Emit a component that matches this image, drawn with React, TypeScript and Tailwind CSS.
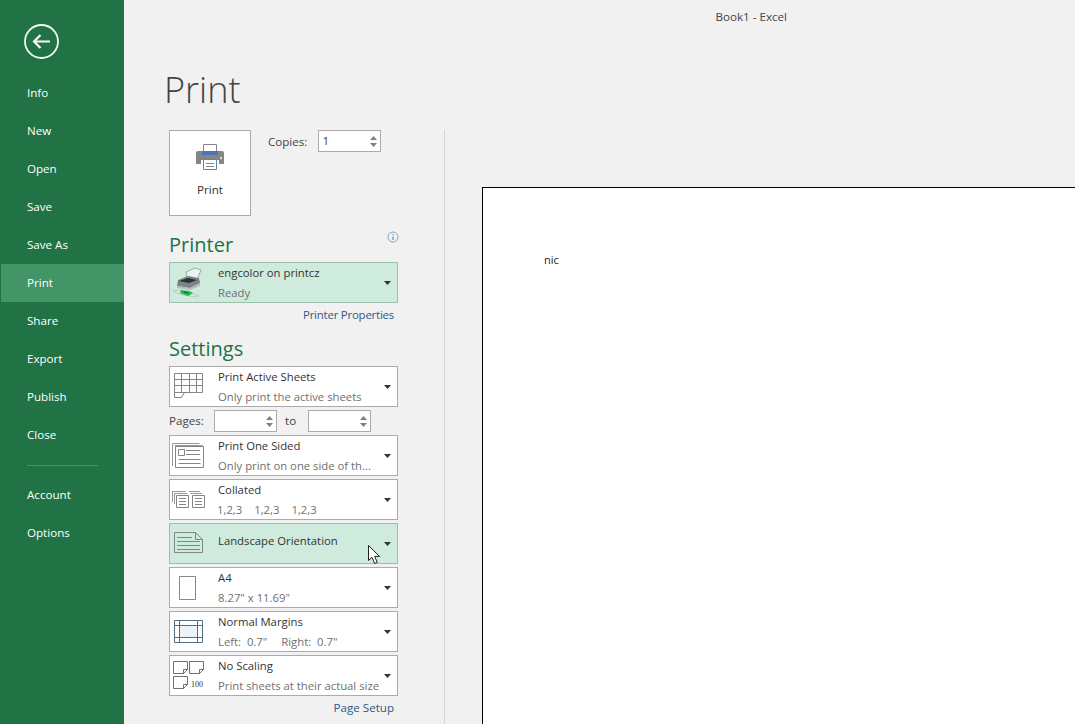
import { ReactNode } from "react";

const navTop = ["Info", "New", "Open", "Save", "Save As", "Print", "Share", "Export", "Publish", "Close"];
const navBottom = ["Account", "Options"];

function NavItem({ label }: { label: string }) {
  const active = label === "Print";
  return (
    <div className={`h-[38px] flex items-center pl-[26px] pb-px ml-px text-[11.6px] text-white ${active ? "bg-[#439467]" : ""}`}>
      {label}
    </div>
  );
}

function Spinner() {
  return (
    <div className="flex flex-col gap-[3px] items-center">
      <svg width="7" height="4" viewBox="0 0 7 4"><path d="M3.500 0 7 4H0z" fill="#808080" /></svg>
      <svg width="7" height="4" viewBox="0 0 7 4"><path d="M0 0h7L3.500 4z" fill="#808080" /></svg>
    </div>
  );
}

function NumBox({ value, w }: { value?: string; w: string }) {
  return (
    <div className={`${w} h-[22px] bg-white border border-[#ababab] flex items-center justify-between pl-[3px] pr-[3px] text-[11.6px] text-[#444]`}>
      <span>{value}</span>
      <Spinner />
    </div>
  );
}

function Dropdown({ icon, title, sub, hi }: { icon: ReactNode; title: string; sub?: ReactNode; hi?: boolean }) {
  return (
    <div className={`w-[229px] h-[41px] border flex items-center ${hi ? "bg-[#cfebdd] border-[#9dc0ad]" : "bg-white border-[#ababab]"}`}>
      <div className="w-[48px] shrink-0 flex justify-start">{icon}</div>
      <div className={`flex-1 min-w-0 flex flex-col gap-[4px] text-[11.3px] leading-[16px] whitespace-nowrap ${sub ? "" : "pb-[5px]"}`}>
        <div className="text-[#333]">{title}</div>
        {sub && <div className="text-[#707070]">{sub}</div>}
      </div>
      <svg className="shrink-0 mr-[6px]" width="7" height="4" viewBox="0 0 7 4"><path d="M0 0h7L3.500 4z" fill="#333" /></svg>
    </div>
  );
}

const s = { fill: "none", stroke: "#858585", strokeWidth: 1 };

const SheetsIcon = (
  <svg className="ml-[4px] mt-[-1px]" width="29" height="26" viewBox="0 0 29 26" {...s}>
    <path d="M.5.500h28v19H.5zM.5 6.500h28M.5 12.500h28M7.500.500v19M15.500.500v19M22.500.500v19M.5 19.500v5h7l3-5" />
  </svg>
);
const OneSidedIcon = (
  <svg className="ml-[2px] mt-[-1px]" width="32" height="25" viewBox="0 0 32 25" {...s}>
    <path d="M.5 23V.500h27" stroke="#999" />
    <path d="M2.500 2.500h28" stroke="#999" />
    <path d="M3.500 3.500h28v21h-28zM6.500 6.500h6v6h-6zM14 7.500h14M14 11.500h14M6.500 16.500h22M6.500 20.500h22" />
  </svg>
);
const CollatedIcon = (
  <svg className="ml-[2px] mt-[-1px]" width="33" height="17" viewBox="0 0 33 17" {...s}>
    <path d="M.5 11V.500h13M2.500 13V2.500h13M17 .500h11M18 2.500h12" stroke="#999" />
    <path d="M4.500 4.500h12v12h-12zM7 7.500h7M7 10.500h7M7 13.500h7M20.500 4.500h12v12h-12zM23 7.500h7M23 10.500h7M23 13.500h7" />
  </svg>
);
const LandscapeIcon = (
  <svg className="ml-[4px] mb-[3px]" width="29" height="21" viewBox="0 0 29 21" {...s}>
    <path d="M.5.500h21l7 7v13H.5zM21.500.500v7h7M3 5.500h15M3 9.500h23M3 13.500h23M3 17.500h23" />
  </svg>
);
const A4Icon = (
  <svg className="ml-[9px]" width="17" height="24" viewBox="0 0 17 24" {...s}><path d="M.5.500h16v23H.5z" /></svg>
);
const MarginsIcon = (
  <svg className="ml-[4px]" width="29" height="24" viewBox="0 0 29 24" fill="none" stroke="#4e7080">
    <path d="M5.500 5.500h18v12h-18z" fill="#eaf4fa" stroke="none" />
    <path d="M.5.500h28v22H.5zM.5 5.500h28M.5 17.500h28M5.500.500v22M23.500.500v22" />
  </svg>
);
const ScalingIcon = (
  <svg className="ml-[3px]" width="32" height="29" viewBox="0 0 32 29" {...s}>
    <path d="M.5.500h14v8l-4 4h-10zM14.500 8.500h-4v4M16.500.500h14v8l-4 4h-10zM30.500 8.500h-4v4M.5 15.500h14v8l-4 4h-10zM14.500 23.500h-4v4" stroke="#707070" />
    <text x="18" y="26" fontSize="8" fontFamily="'Liberation Serif', serif" fill="#333" stroke="none">100</text>
  </svg>
);
const PrinterIcon = (
  <svg className="ml-[2px]" width="32" height="31" viewBox="0 0 32 31">
    <path d="M14 5l9-4 6 2-4 10-9 1z" fill="#eef2f0" stroke="#8d9893" strokeWidth="0.8" />
    <path d="M6 13l10-4 11 2 1 5-10 5-13-2z" fill="#7b8387" />
    <path d="M7 14l9-3 9 2-8 3z" fill="#2b3033" />
    <path d="M5 19l13 2 10-5v3l-10 4-13-2z" fill="#b5bcbb" />
    <path d="M1 24l6-1 3 1 9 2 5 2 3 1-2 1-8-1-10-2z" fill="#dde6e1" stroke="#a0aea8" strokeWidth="0.5" />
    <path d="M9 23l8 1 4 2-5 3-8-3z" fill="#1fb84e" />
    <path d="M12 25l4 1" stroke="#0a6a2a" />
  </svg>
);

export default function App() {
  return (
    <div className="relative w-[1075px] h-[724px] overflow-hidden flex bg-[#f1f1f1] font-['Open_Sans','Noto_Sans',sans-serif] text-[#444]">
      <aside className="w-[124px] shrink-0 bg-[#217346] flex flex-col">
        <div className="h-[74px] shrink-0 pl-[24px] pt-[24px]">
          <svg width="35" height="35" viewBox="0 0 35 35" fill="none" stroke="#f3f8f5">
            <circle cx="17.500" cy="17.500" r="16.500" strokeWidth="1.800" />
            <path d="M26 17.500H10M16.500 11l-6.500 6.500 6.500 6.500" strokeWidth="2.200" />
          </svg>
        </div>
        {navTop.map((n) => <NavItem key={n} label={n} />)}
        <div className="h-[11px] mt-[11px] ml-[27px] w-[71px] border-t border-[#4b9069]" />
        {navBottom.map((n) => <NavItem key={n} label={n} />)}
      </aside>

      <main className="flex-1 min-w-0 flex flex-col">
        <div className="h-[33px] shrink-0 flex items-center justify-end pr-[288px] text-[11.6px] text-[#444]">Book1 - Excel</div>
        <div className="flex-1 min-h-0 flex flex-col">
          <h1 className="pl-[40px] h-[97px] pt-[32px] text-[36px] leading-[50px] font-light text-[#444] shrink-0">Print</h1>
          <div className="flex-1 min-h-0 flex">
            <section className="w-[321px] shrink-0 border-r border-[#d6d6d6] pl-[45px]">
              <div className="flex items-start">
                <div className="w-[82px] h-[86px] bg-white border border-[#ababab] flex flex-col items-center pt-[13px]">
                  <svg width="28" height="26" viewBox="0 0 28 26">
                    <path d="M7.500.500h13v8h-13z" fill="#fff" stroke="#858585" />
                    <path d="M2 7h24a2 2 0 0 1 2 2v11h-5v-4H5v4H0V9a2 2 0 0 1 2-2z" fill="#858585" />
                    <path d="M6 7h16v4H6z" fill="#4a77ac" />
                    <path d="M7.500 15.500h13v10h-13z" fill="#fff" stroke="#5d84b0" />
                    <path d="M10 19.500h8M10 22.500h8" stroke="#858585" />
                    <circle cx="25" cy="14" r="1" fill="#fff" />
                  </svg>
                  <span className="mt-[11px] text-[11.6px] leading-[18px] text-[#333]">Print</span>
                </div>
                <div className="ml-[17px] flex items-center gap-[11px] text-[11.6px]">
                  <span className="pt-px">Copies:</span>
                  <NumBox value="1" w="w-[63px]" />
                </div>
              </div>

              <div className="w-[229px] mt-[15px] h-[31px] flex justify-between items-start">
                <h2 className="text-[20px] leading-[28px] text-[#217346]">Printer</h2>
                <svg className="mr-[-1px]" width="12" height="12" viewBox="0 0 12 12" fill="none">
                  <circle cx="6" cy="6" r="5" stroke="#7fa7cf" />
                  <path d="M6 3v1M6 5.500V9" stroke="#4a77ac" />
                </svg>
              </div>
              <Dropdown hi icon={PrinterIcon} title="engcolor on printcz" sub="Ready" />
              <div className="w-[229px] pr-[4px] h-[23px] flex items-center justify-end text-[11.4px] tracking-[-0.2px] text-[#2b5a85]">Printer Properties</div>

              <h2 className="text-[20px] leading-[28px] h-[40px] pt-[9px] text-[#217346]">Settings</h2>
              <Dropdown icon={SheetsIcon} title="Print Active Sheets" sub="Only print the active sheets" />
              <div className="h-[28px] w-[229px] flex items-center text-[11.6px]">
                <span className="w-[45px]">Pages:</span>
                <NumBox w="w-[63px]" />
                <span className="w-[31px] pl-[8px]">to</span>
                <NumBox w="w-[63px]" />
              </div>
              <div className="flex flex-col gap-[3px]">
                <Dropdown icon={OneSidedIcon} title="Print One Sided" sub="Only print on one side of th..." />
                <Dropdown
                  icon={CollatedIcon}
                  title="Collated"
                  sub={<span className="flex gap-[12px] -ml-px"><span>1,2,3</span><span>1,2,3</span><span>1,2,3</span></span>}
                />
                <Dropdown hi icon={LandscapeIcon} title="Landscape Orientation" />
                <Dropdown icon={A4Icon} title="A4" sub={'8.27" x 11.69"'} />
                <Dropdown
                  icon={MarginsIcon}
                  title="Normal Margins"
                  sub={<span className="flex gap-[14px]"><span>Left:&nbsp; 0.7"</span><span>Right:&nbsp; 0.7"</span></span>}
                />
                <Dropdown icon={ScalingIcon} title="No Scaling" sub="Print sheets at their actual size" />
              </div>
              <div className="w-[229px] pr-[4px] h-[23px] flex items-center justify-end text-[11.6px] text-[#2b5a85]">Page Setup</div>
            </section>

            <section className="flex-1 min-w-0 pl-[37px] pt-[57px]">
              <div className="h-[600px] w-[700px] bg-white border border-black pl-[61px] pt-[64px] text-[11px] leading-[16px] text-[#222]">nic</div>
            </section>
          </div>
        </div>
      </main>

      <svg className="absolute left-[367px] top-[544px]" width="15" height="21" viewBox="0 0 15 21">
        <path d="M1.500 1.500v15l3.500-3.200 2.700 6.200 2.600-1.100-2.600-6h4.800z" fill="#fff" stroke="#222" strokeWidth="1" />
      </svg>
    </div>
  );
}
